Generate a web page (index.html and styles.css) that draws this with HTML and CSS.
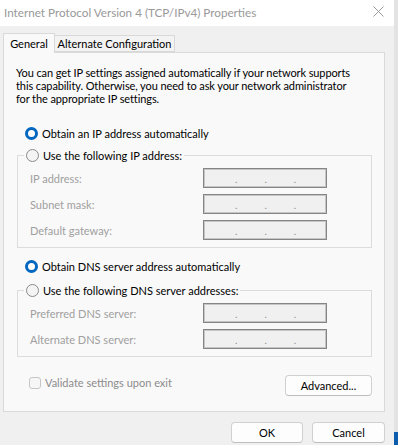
FILE: index.html
```html
<!DOCTYPE html>
<html>
<head>
<meta charset="utf-8">
<link rel="stylesheet" href="styles.css">
</head>
<body>
<div class="screen">
  <div class="dialog">
    <div class="titlebar">
      <span class="title">Internet Protocol Version 4 (TCP/IPv4) Properties</span>
      <svg class="close" width="11" height="11" viewBox="0 0 11 11"><path d="M0.5 0.5 L10.5 10.5 M10.5 0.5 L0.5 10.5" stroke="#9a9a9a" stroke-width="1" fill="none"/></svg>
    </div>
    <div class="body">
      <div class="tabs">
        <div class="tab active">General</div>
        <div class="tab alt">Alternate Configuration</div>
      </div>
      <div class="panel">
        <p class="desc">You can get IP settings assigned automatically if your network supports<br>this capability. Otherwise, you need to ask your network administrator<br>for the appropriate IP settings.</p>

        <div class="option first"><span class="radio on"></span><span>Obtain an IP address automatically</span></div>
        <fieldset class="group">
          <legend class="option"><span class="radio"></span><span>Use the following IP address:</span></legend>
          <div class="field"><span class="label">IP address:</span><span class="ipbox"><i>.</i><i>.</i><i>.</i></span></div>
          <div class="field"><span class="label">Subnet mask:</span><span class="ipbox"><i>.</i><i>.</i><i>.</i></span></div>
          <div class="field"><span class="label">Default gateway:</span><span class="ipbox"><i>.</i><i>.</i><i>.</i></span></div>
        </fieldset>

        <div class="option dns"><span class="radio on"></span><span>Obtain DNS server address automatically</span></div>
        <fieldset class="group group2">
          <legend class="option"><span class="radio"></span><span>Use the following DNS server addresses:</span></legend>
          <div class="field"><span class="label">Preferred DNS server:</span><span class="ipbox"><i>.</i><i>.</i><i>.</i></span></div>
          <div class="field"><span class="label">Alternate DNS server:</span><span class="ipbox"><i>.</i><i>.</i><i>.</i></span></div>
        </fieldset>

        <div class="bottomrow">
          <div class="check"><span class="box"></span><span>Validate settings upon exit</span></div>
          <button class="btn adv">Advanced...</button>
        </div>
      </div>
      <div class="footer">
        <button class="btn ok">OK</button>
        <button class="btn cancel">Cancel</button>
      </div>
    </div>
  </div>
  <div class="edge"><div class="taskbar"></div></div>
</div>
</body>
</html>
```
FILE: styles.css
```css
html, body {
  margin: 0;
  padding: 0;
}
body {
  width: 398px;
  height: 445px;
  overflow: hidden;
  background: #f0f0f0;
  font-family: Lato, "Liberation Sans", sans-serif;
  font-size: 11px;
  color: #000;
}
.screen {
  display: flex;
  height: 445px;
}
.dialog {
  width: 394px;
  display: flex;
  flex-direction: column;
}
.edge {
  width: 4px;
  background: #e3e3e3;
  display: flex;
  flex-direction: column;
  justify-content: flex-end;
}
.taskbar {
  height: 13px;
  background: #0b5cad;
}
.titlebar {
  height: 26px;
  background: #fff;
  display: flex;
  align-items: center;
  justify-content: space-between;
  padding: 0 10px 2px 4px;
  box-sizing: border-box;
}
.title {
  color: #999;
  font-size: 11.7px;
}
.close {
  display: block;
  margin-top: -1px;
}
.body {
  flex: 1;
  padding: 7px 9px 0 3px;
  display: flex;
  flex-direction: column;
}
.tabs {
  display: flex;
  align-items: flex-end;
  height: 20px;
  position: relative;
  z-index: 1;
}
.tab {
  height: 16px;
  line-height: 16px;
  box-sizing: border-box;
  border: 1px solid #d9d9d9;
  border-bottom: none;
  background: #f3f3f3;
  color: #000;
  text-align: center;
  white-space: nowrap;
}
.tab.active {
  width: 52px;
  height: 20px;
  line-height: 19px;
  background: #f9f9f9;
}
.tab.alt {
  width: 121px;
  margin-left: -1px;
  margin-bottom: 1px;
  border-bottom: 1px solid #d9d9d9;
  height: 17px;
}
.panel {
  height: 360px;
  box-sizing: border-box;
  border: 1px solid #d9d9d9;
  margin-top: -1px;
  background: #f9f9f9;
  padding: 13px 12px 0 12px;
  display: flex;
  flex-direction: column;
}
.desc {
  margin: 0;
  line-height: 13px;
  white-space: nowrap;
  letter-spacing: -0.1px;
}
.option {
  display: flex;
  align-items: center;
  gap: 4px;
  height: 16px;
  padding-left: 9px;
}
.option.first {
  margin-top: 20px;
}
.option.dns {
  margin-top: 10px;
}
.radio {
  width: 13px;
  height: 13px;
  box-sizing: border-box;
  border-radius: 50%;
  border: 1px solid #8a8a8a;
  background: #f4f4f4;
  flex: none;
}
.radio.on {
  border: 3.5px solid #0067c0;
  background: #fff;
}
.group {
  margin: 6px 0 0 1px;
  padding: 5px 12px 7px 12px;
  border: 1px solid #dcdcdc;
  display: flex;
  flex-direction: column;
  gap: 6px;
}
.group legend.option {
  padding: 0 2px 0 2px;
  margin-left: -6px;
  background: #f9f9f9;
}
.group2 {
  margin-top: 8px;
}
.field {
  display: flex;
  align-items: center;
  justify-content: space-between;
  height: 20px;
  padding-right: 32px;
}
.label {
  color: #a0a0a0;
}
.ipbox {
  width: 124px;
  height: 20px;
  box-sizing: border-box;
  border: 1px solid #858585;
  box-shadow: inset 0 0 0 1px #c6c6c6;
  background: #f0f0f0;
  display: flex;
  padding-left: 31px;
  gap: 27px;
  align-items: flex-end;
}
.ipbox i {
  font-style: normal;
  color: #8a8a8a;
  font-size: 10px;
  line-height: 15px;
}
.bottomrow {
  margin-top: 18px;
  display: flex;
  justify-content: space-between;
  align-items: flex-start;
  padding-left: 13px;
}
.check {
  display: flex;
  align-items: center;
  gap: 4px;
  color: #8c8c8c;
  margin-top: 1px;
}
.check .box {
  width: 12px;
  height: 12px;
  box-sizing: border-box;
  border: 1px solid #c6c6c6;
  border-radius: 3px;
  background: #f6f6f6;
}
.btn {
  font-family: inherit;
  font-size: 11px;
  color: #000;
  background: #fdfdfd;
  border: 1px solid #d0d0d0;
  border-bottom-color: #bdbdbd;
  border-radius: 4px;
  height: 21px;
  padding: 0;
  line-height: 18px;
}
.adv {
  width: 87px;
}
.footer {
  display: flex;
  justify-content: flex-end;
  gap: 9px;
  padding-top: 10px;
  padding-right: 0;
}
.ok {
  width: 72px;
}
.cancel {
  width: 73px;
}
```
